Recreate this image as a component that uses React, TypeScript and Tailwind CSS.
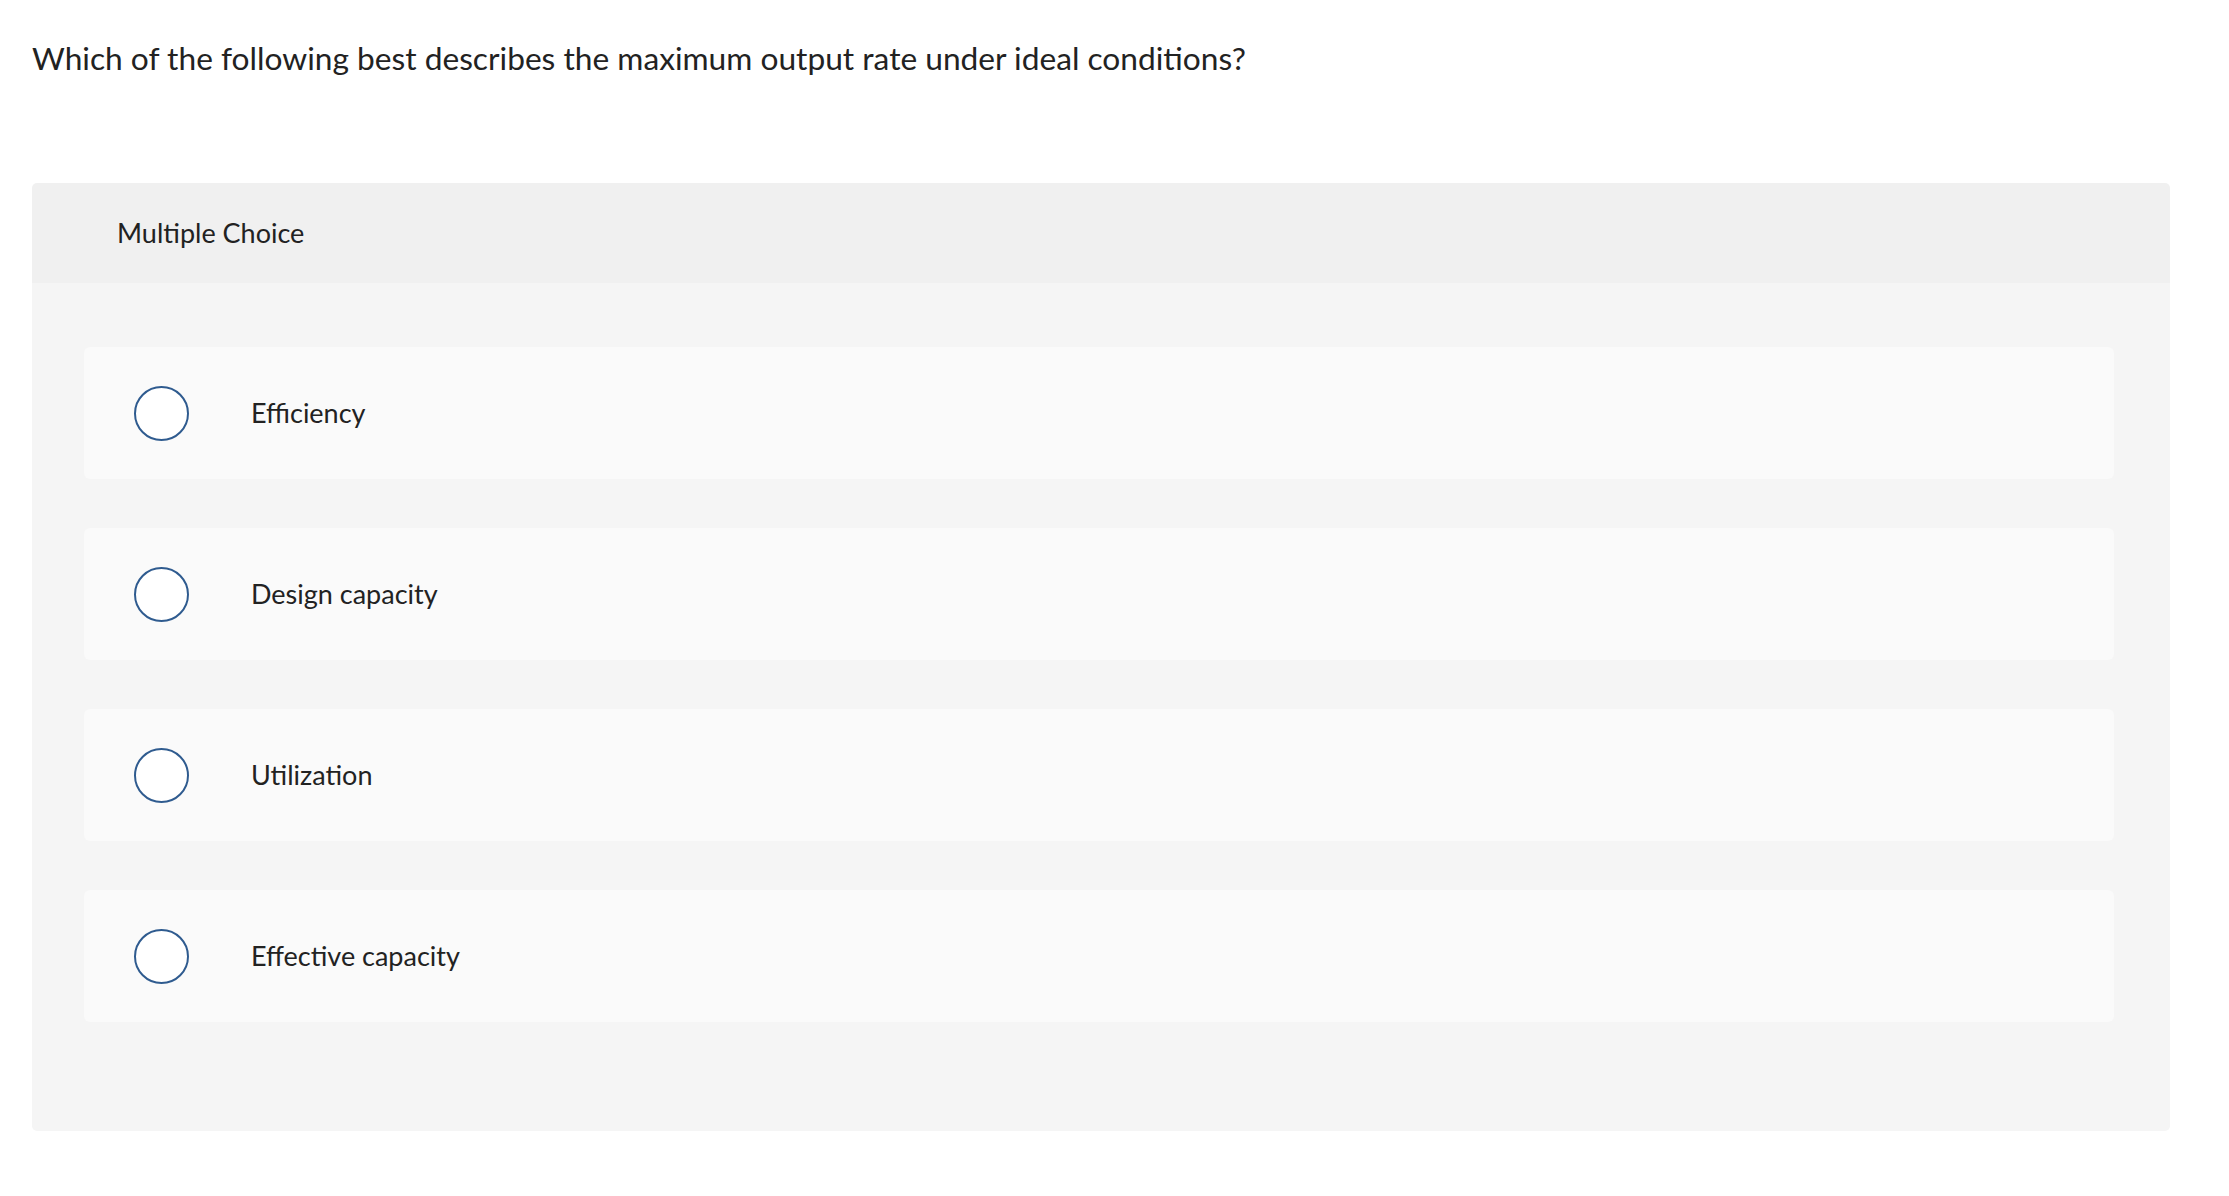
const options = ["Efficiency", "Design capacity", "Utilization", "Effective capacity"];

export default function App() {
  return (
    <div
      className="min-h-screen bg-white pl-[32px] pr-[59px] pt-[36px] text-[27px] text-[#222222]"
      style={{ fontFamily: "Lato, 'Open Sans', sans-serif" }}
    >
      <p className="text-[31.7px] leading-[44px]">
        Which of the following best describes the maximum output rate under ideal conditions?
      </p>

      <div className="mt-[103px] overflow-hidden rounded-[5px]">
        <div className="flex h-[100px] items-center bg-[#f0f0f0] pl-[85px]">
          <span className="leading-[40px]">Multiple Choice</span>
        </div>
        <div className="flex flex-col gap-[49px] bg-[#f5f5f5] pb-[109px] pl-[52px] pr-[56px] pt-[64px]">
          {options.map((opt) => (
            <label
              key={opt}
              className="flex h-[132px] cursor-pointer items-center rounded-[6px] bg-[#fafafa] pl-[50px]"
            >
              <span className="h-[55px] w-[55px] shrink-0 rounded-full border-2 border-[#2f5b8f] bg-white" />
              <span className="ml-[62px] leading-[40px]">{opt}</span>
            </label>
          ))}
        </div>
      </div>
    </div>
  );
}
